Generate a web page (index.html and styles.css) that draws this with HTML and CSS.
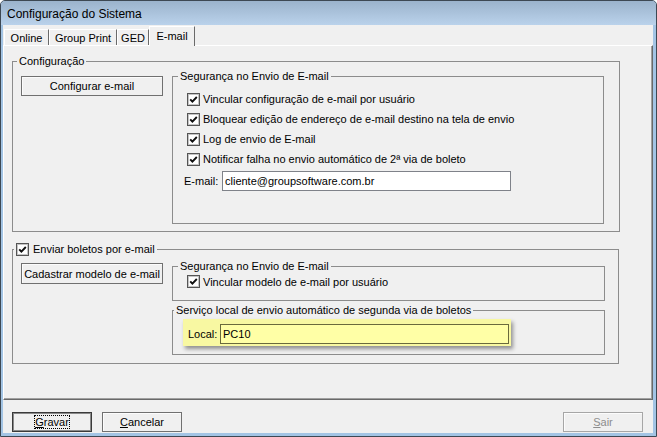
FILE: index.html
```html
<!DOCTYPE html>
<html lang="pt">
<head>
<meta charset="utf-8">
<title>Configuração do Sistema</title>
<link rel="stylesheet" href="styles.css">
</head>
<body>
<div class="window">
  <div class="titlebar"><span class="title">Configuração do Sistema</span></div>
  <div class="client">
    <div class="tabs">
      <div class="tab t-online">Online</div>
      <div class="tab t-gp">Group Print</div>
      <div class="tab t-ged">GED</div>
      <div class="tab tab-active t-email">E-mail</div>
    </div>
    <div class="panel">
      <fieldset class="group g1">
        <legend class="lg-outer">Configuração</legend>
        <div class="group-body">
          <button class="btn btn-side b1">Configurar e-mail</button>
          <fieldset class="group inner inner1">
            <legend class="lg-inner">Segurança no Envio de E-mail</legend>
            <div class="check-row"><svg class="cb" width="13" height="13" viewBox="0 0 13 13"><rect x="0.5" y="0.5" width="12" height="12" fill="#fff" stroke="#555"/><rect x="1.5" y="1.5" width="10" height="10" fill="none" stroke="#c4c4c4"/><path d="M3.2 6.3 L5.4 8.6 L9.8 4" fill="none" stroke="#111" stroke-width="1.9"/></svg><span>Vincular configuração de e-mail por usuário</span></div>
            <div class="check-row"><svg class="cb" width="13" height="13" viewBox="0 0 13 13"><rect x="0.5" y="0.5" width="12" height="12" fill="#fff" stroke="#555"/><rect x="1.5" y="1.5" width="10" height="10" fill="none" stroke="#c4c4c4"/><path d="M3.2 6.3 L5.4 8.6 L9.8 4" fill="none" stroke="#111" stroke-width="1.9"/></svg><span>Bloquear edição de endereço de e-mail destino na tela de envio</span></div>
            <div class="check-row"><svg class="cb" width="13" height="13" viewBox="0 0 13 13"><rect x="0.5" y="0.5" width="12" height="12" fill="#fff" stroke="#555"/><rect x="1.5" y="1.5" width="10" height="10" fill="none" stroke="#c4c4c4"/><path d="M3.2 6.3 L5.4 8.6 L9.8 4" fill="none" stroke="#111" stroke-width="1.9"/></svg><span>Log de envio de E-mail</span></div>
            <div class="check-row"><svg class="cb" width="13" height="13" viewBox="0 0 13 13"><rect x="0.5" y="0.5" width="12" height="12" fill="#fff" stroke="#555"/><rect x="1.5" y="1.5" width="10" height="10" fill="none" stroke="#c4c4c4"/><path d="M3.2 6.3 L5.4 8.6 L9.8 4" fill="none" stroke="#111" stroke-width="1.9"/></svg><span>Notificar falha no envio automático de 2ª via de boleto</span></div>
            <div class="field-row"><span class="field-label">E-mail:</span><div class="textbox email">cliente@groupsoftware.com.br</div></div>
          </fieldset>
        </div>
      </fieldset>

      <fieldset class="group g2">
        <legend class="lg-check"><svg class="cb" width="13" height="13" viewBox="0 0 13 13"><rect x="0.5" y="0.5" width="12" height="12" fill="#fff" stroke="#555"/><rect x="1.5" y="1.5" width="10" height="10" fill="none" stroke="#c4c4c4"/><path d="M3.2 6.3 L5.4 8.6 L9.8 4" fill="none" stroke="#111" stroke-width="1.9"/></svg><span>Enviar boletos por e-mail</span></legend>
        <div class="group-body">
          <button class="btn btn-side b2">Cadastrar modelo de e-mail</button>
          <div class="stack">
            <fieldset class="group inner innerA">
              <legend class="lg-inner">Segurança no Envio de E-mail</legend>
              <div class="check-row short"><svg class="cb" width="13" height="13" viewBox="0 0 13 13"><rect x="0.5" y="0.5" width="12" height="12" fill="#fff" stroke="#555"/><rect x="1.5" y="1.5" width="10" height="10" fill="none" stroke="#c4c4c4"/><path d="M3.2 6.3 L5.4 8.6 L9.8 4" fill="none" stroke="#111" stroke-width="1.9"/></svg><span>Vincular modelo de e-mail por usuário</span></div>
            </fieldset>
            <fieldset class="group inner innerB">
              <legend class="lg-inner">Serviço local de envio automático de segunda via de boletos</legend>
              <div class="highlight">
                <span class="local-label">Local:</span>
                <div class="textbox local">PC10</div>
              </div>
            </fieldset>
          </div>
        </div>
      </fieldset>
    </div>
    <div class="footer">
      <button class="btn fbtn default"><span class="focus"><u>G</u>ravar</span></button>
      <button class="btn fbtn"><u>C</u>ancelar</button>
      <button class="btn fbtn disabled"><u>S</u>air</button>
    </div>
  </div>
</div>
</body>
</html>
```

FILE: styles.css
```css
html, body {
  margin: 0;
  padding: 0;
  background: #ffffff;
}

body {
  font-family: "Liberation Sans", Arial, sans-serif;
  font-size: 11px;
  color: #000;
}

.window {
  width: 657px;
  height: 437px;
  box-sizing: border-box;
  border: 1px solid #3d4853;
  border-radius: 5px 5px 0 0;
  background: #a3c4e4;
  display: flex;
  flex-direction: column;
  overflow: hidden;
}

.titlebar {
  height: 24px;
  flex: none;
  box-sizing: border-box;
  padding: 6px 0 0 6px;
  background: linear-gradient(#9bb3cc, #bad2eb);
  font-size: 12px;
  line-height: 14px;
}

.client {
  height: 408px;
  flex: none;
  margin: 0 3px 0 2px;
  background: #f0f0f0;
  display: flex;
  flex-direction: column;
}

/* tabs */
.tabs {
  height: 20px;
  flex: none;
  display: flex;
  align-items: flex-end;
  padding-left: 1px;
}

.tab {
  height: 16px;
  box-sizing: border-box;
  border-top: 1px solid #fff;
  border-left: 1px solid #fff;
  border-right: 1px solid #6a6a6a;
  display: flex;
  align-items: center;
  justify-content: center;
  background: #f0f0f0;
}

.t-online { width: 45px; }
.t-gp { width: 68px; }
.t-ged { width: 32px; }
.t-email { width: 46px; }

.tab-active {
  height: 20px;
  margin-bottom: -1px;
  padding-bottom: 2px;
  position: relative;
  z-index: 1;
}

/* panel */
.panel {
  height: 355px;
  flex: none;
  box-sizing: border-box;
  border-top: 1px solid #fff;
  border-left: 1px solid #fff;
  border-right: 1px solid #696969;
  border-bottom: 1px solid #696969;
  box-shadow: inset -1px -1px 0 #a0a0a0;
  padding: 8px 0 0 8px;
}

/* group boxes */
.group {
  margin: 0;
  border: 1px solid #8c8c8c;
  box-sizing: border-box;
  min-width: 0;
}

legend {
  padding: 0 2px;
  height: 14px;
  line-height: 14px;
  box-sizing: border-box;
}

.g1 {
  width: 608px;
  padding: 1px 0 7px 8px;
}

.lg-outer { margin-left: -4px; }
.lg-inner { margin-left: -9px; }

.group-body {
  display: flex;
  align-items: flex-start;
}

.btn {
  font-family: "Liberation Sans", Arial, sans-serif;
  font-size: 11px;
  color: #000;
  background: #f0f0f0;
  border: 1px solid #707070;
  box-shadow: inset 1px 1px 0 #fcfcfc;
  box-sizing: border-box;
  padding: 0;
  margin: 0;
}

.btn-side {
  width: 142px;
  margin-right: 9px;
  flex: none;
}

.b1 { height: 20px; margin-top: 7px; }
.b2 { height: 21px; margin-top: 4px; }

.inner1 {
  width: 432px;
  padding: 6px 0 32px 14px;
}

.check-row {
  height: 20px;
  display: flex;
  align-items: center;
  white-space: nowrap;
}

.check-row.short { height: 17px; }

.cb {
  flex: none;
  display: block;
  margin-right: 3px;
}

.field-row {
  margin-top: 2px;
  margin-left: -3px;
  display: flex;
  align-items: center;
}

.field-label { width: 38px; flex: none; }

.textbox {
  height: 20px;
  box-sizing: border-box;
  border: 1px solid #7f8289;
  background: #fff;
  padding-left: 2px;
  line-height: 18px;
  white-space: nowrap;
}

.email { width: 289px; }

.g2 {
  width: 607px;
  margin-top: 10px;
  padding: 3px 0 8px 8px;
}

.lg-check {
  margin-left: -7px;
  display: flex;
  align-items: center;
}

.lg-check .cb { margin-right: 4px; }

.stack {
  display: flex;
  flex-direction: column;
}

.innerA {
  width: 433px;
  padding: 0 0 10px 14px;
}

.innerB {
  width: 433px;
  margin-top: 2px;
  padding: 2px 0 8px 10px;
}

.highlight {
  width: 328px;
  height: 27px;
  box-sizing: border-box;
  background: #f8f8a2;
  box-shadow: 2px 3px 4px rgba(0, 0, 0, 0.4);
  display: flex;
  align-items: flex-end;
  padding: 0 2px 2px 5px;
}

.local-label {
  width: 32px;
  flex: none;
  line-height: 20px;
}

.local {
  width: 289px;
  background: #ffffa6;
  border-color: #6a6a3c;
}

/* footer */
.footer {
  flex: 1;
  display: flex;
  align-items: flex-start;
  gap: 10px;
  padding: 12px 10px 0 9px;
}

.fbtn {
  width: 80px;
  height: 20px;
}

.fbtn.default {
  border-color: #3a3a3a;
  box-shadow: inset 0 0 0 1px #8a8a8a;
}

.focus {
  outline: 1px dotted #000;
  outline-offset: 0;
}

.fbtn.disabled {
  margin-left: auto;
  color: #8d8d8d;
  border-color: #a6a6a6;
}
```
